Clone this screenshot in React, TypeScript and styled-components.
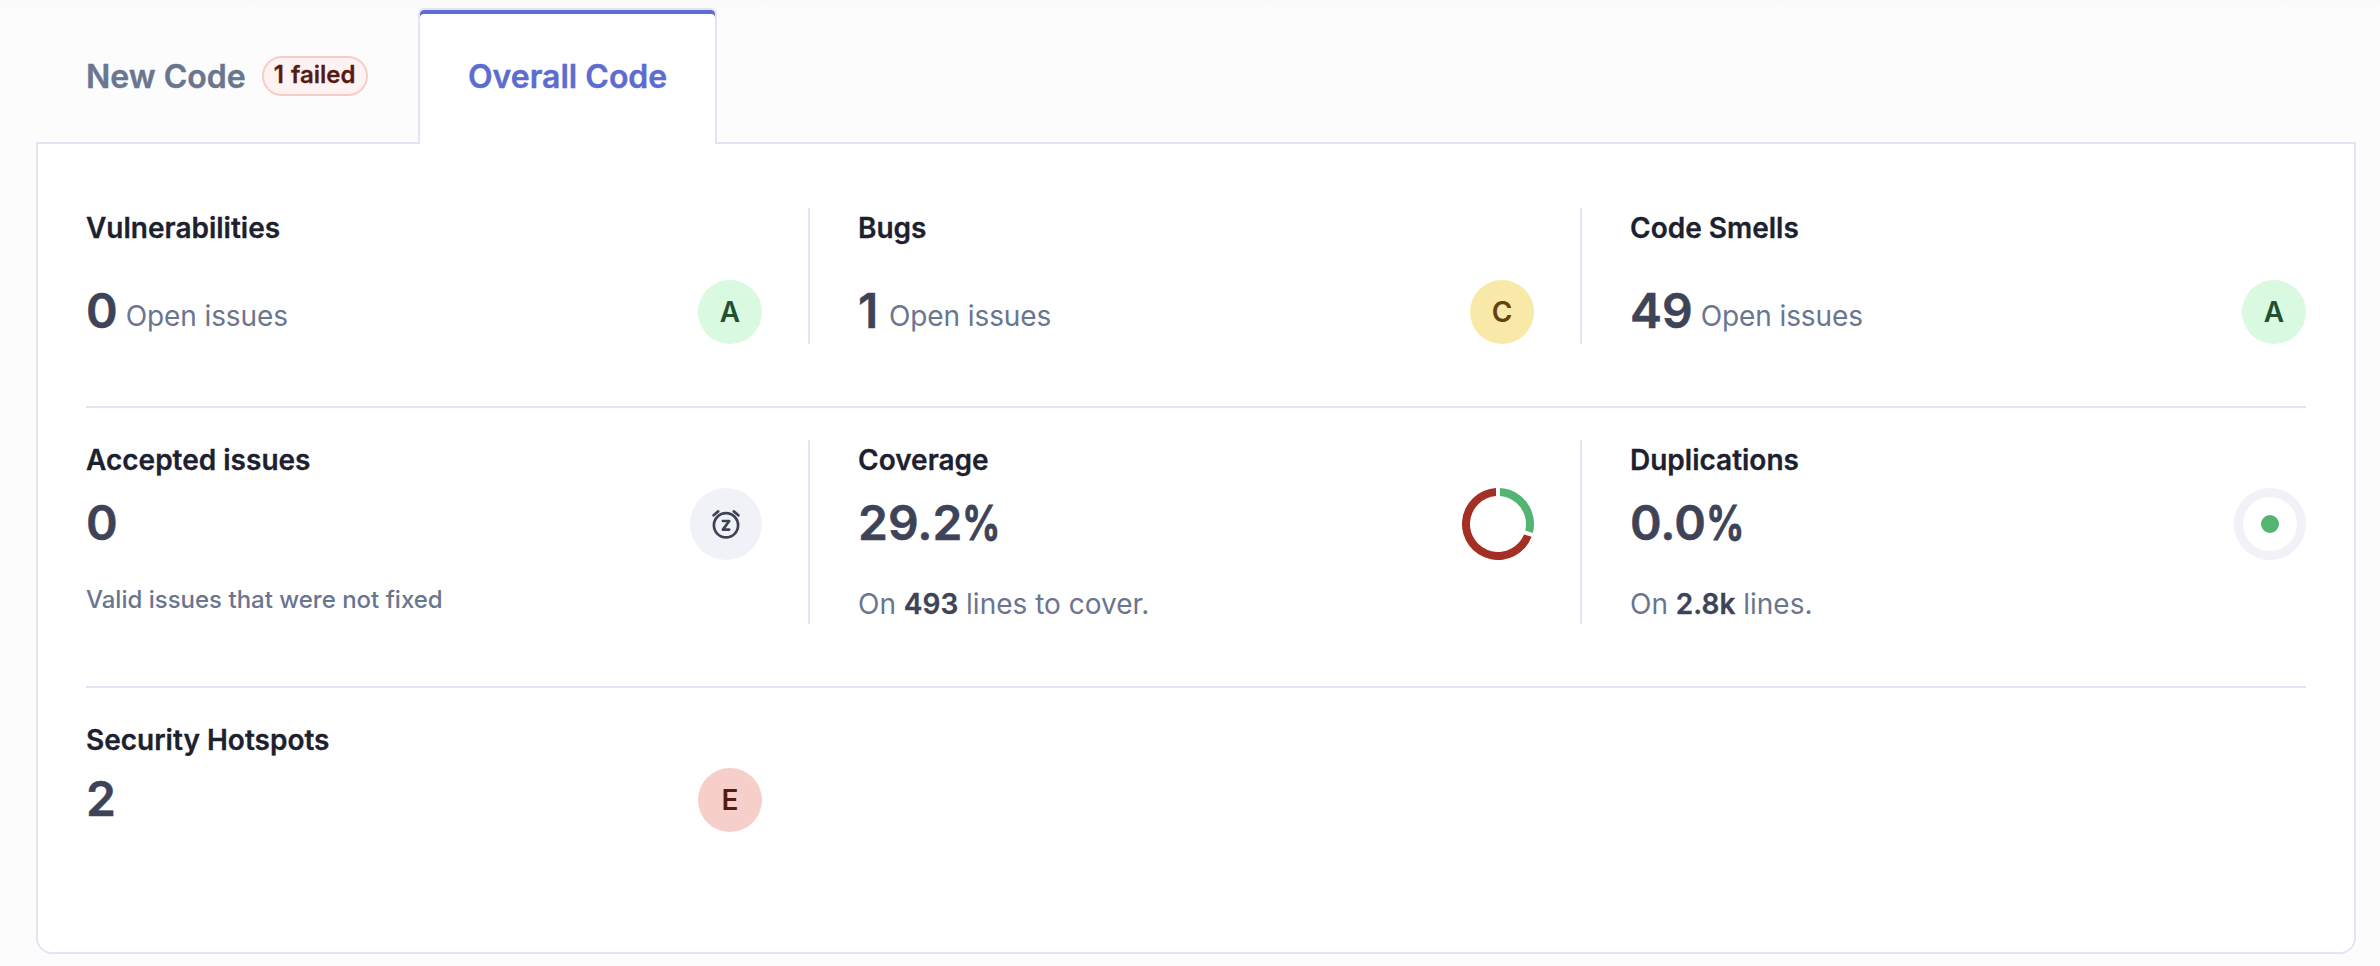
import React from "react";
import styled, { createGlobalStyle } from "styled-components";

const colors = {
  page: "#fcfcfd",
  panel: "#ffffff",
  border: "#e1e6f3",
  accent: "#5d6cd0",
  title: "#1d212f",
  value: "#3e4357",
  subtle: "#6a7590",
  disc: "#f1f2f8",
  good: "#54b471",
  bad: "#a43025",
};

const ratingColors = {
  A: { background: "#d9f9e1", text: "#215033" },
  C: { background: "#f9e9a9", text: "#66410f" },
  E: { background: "#f6cfca", text: "#551b13" },
};
type Grade = keyof typeof ratingColors;

const GlobalStyle = createGlobalStyle`
  *, *::before, *::after { box-sizing: border-box; }
  body {
    margin: 0;
    background: ${colors.page};
    font-family: Inter, "Liberation Sans", sans-serif;
  }
`;

const Page = styled.main`
  height: 966px;
  padding: 8px 24px 12px 36px;
  display: flex;
  flex-direction: column;
  background: linear-gradient(#f9f9f9, ${colors.page} 14px);
`;

const TabBar = styled.div`
  display: flex;
  height: 136px;
  margin-bottom: -2px;
  z-index: 1;
`;

const Tab = styled.button<{ $active?: boolean }>`
  appearance: none;
  flex: none;
  display: flex;
  align-items: center;
  gap: 16px;
  width: ${(p) => (p.$active ? 299 : 382)}px;
  padding: 0 0 2px 48px;
  border: 2px solid ${(p) => (p.$active ? colors.border : "transparent")};
  border-bottom: 0;
  border-radius: 6px 6px 0 0;
  background: ${(p) => (p.$active ? colors.panel : "transparent")};
  box-shadow: ${(p) => (p.$active ? `inset 0 4px 0 ${colors.accent}` : "none")};
  color: ${(p) => (p.$active ? colors.accent : colors.subtle)};
  font: 600 32px/48px Inter, "Liberation Sans", sans-serif;
  white-space: nowrap;
`;

const TabLabel = styled.span`
  padding-top: 2px;
  -webkit-text-stroke: 0.4px currentColor;
`;

const FailedBadge = styled.span`
  width: 106px;
  height: 40px;
  border: 2px solid #f8cdc8;
  border-radius: 20px;
  background: #fef3f2;
  color: #551b13;
  font-size: 24px;
  font-weight: 600;
  line-height: 34px;
  text-align: center;
  word-spacing: 1px;
  -webkit-text-stroke: 0.3px currentColor;
`;

const Panel = styled.section`
  flex: 1;
  padding: 64px 48px 0;
  border: 2px solid ${colors.border};
  border-radius: 0 0 16px 16px;
  background: ${colors.panel};
`;

const MeasureRow = styled.div`
  display: grid;
  grid-template-columns: 676px 726px 726px;
  column-gap: 46px;

  & + & {
    margin-top: 62px;
    padding-top: 32px;
    border-top: 2px solid ${colors.border};
  }
`;

const Measure = styled.article`
  display: flex;
  flex-direction: column;

  & + & {
    padding-left: 48px;
    border-left: 2px solid ${colors.border};
  }
`;

const Title = styled.h3`
  margin: 0;
  color: ${colors.title};
  font-size: 28px;
  font-weight: 600;
  line-height: 40px;
  -webkit-text-stroke: 0.3px currentColor;
`;

const ValueLine = styled.div<{ $spacious?: boolean }>`
  display: flex;
  align-items: center;
  justify-content: space-between;
  margin-top: ${(p) => (p.$spacious ? 32 : 8)}px;
`;

const ValueGroup = styled.div`
  display: flex;
  gap: 8px;
`;

const Value = styled.span`
  min-width: 23px;
  color: ${colors.value};
  font-size: 48px;
  font-weight: 600;
  line-height: 62px;
  padding-bottom: 2px;
  -webkit-text-stroke: 0.5px currentColor;
`;

const Percent = styled.span`
  display: inline-block;
  transform: scaleX(0.8);
  transform-origin: left;
  -webkit-text-stroke: 1px currentColor;
`;

const Unit = styled.span`
  padding-top: 16px;
  color: ${colors.subtle};
  font-size: 28px;
  line-height: 40px;
  letter-spacing: -0.1px;
`;

const Caption = styled.p<{ $small?: boolean }>`
  margin: 24px 0 0;
  color: ${colors.subtle};
  font-size: ${(p) => (p.$small ? 24 : 28)}px;
  font-weight: ${(p) => (p.$small ? 500 : 400)};
  line-height: ${(p) => (p.$small ? 32 : 40)}px;

  strong {
    color: ${colors.value};
    font-weight: 600;
    -webkit-text-stroke: 0.3px currentColor;
  }
`;

const RatingDisc = styled.span<{ $grade: Grade }>`
  display: grid;
  place-items: center;
  width: 64px;
  height: 64px;
  border-radius: 50%;
  background: ${(p) => ratingColors[p.$grade].background};
  color: ${(p) => ratingColors[p.$grade].text};
  font-size: 28px;
  font-weight: 600;
  line-height: 40px;
`;

const IconDisc = styled.span`
  display: grid;
  place-items: center;
  width: 72px;
  height: 72px;
  border-radius: 50%;
  background: ${colors.disc};
`;

const Graphic = styled.svg`
  display: block;
`;

function SnoozeIcon() {
  return (
    <Graphic
      width="32"
      height="32"
      viewBox="0 0 32 32"
      fill="none"
      stroke={colors.value}
      strokeWidth="2.7"
      strokeLinecap="round"
      strokeLinejoin="round"
    >
      <circle cx="16" cy="17.3" r="12.1" />
      <path d="M3.6 7.3 8.2 3.4M28.4 7.3 23.8 3.4" />
      <path d="M12.9 13h6.3l-6.3 8.6h6.3" />
    </Graphic>
  );
}

const OUTER = 36;
const INNER = 28;
const HALF_GAP = 2;

// Ring segment between two angles (degrees, clockwise from the top) with parallel gaps.
function segment(start: number, end: number) {
  const point = (radius: number, degrees: number, side: number) => {
    const angle = (degrees * Math.PI) / 180 + side * Math.asin(HALF_GAP / radius);
    return `${36 + radius * Math.sin(angle)} ${36 - radius * Math.cos(angle)}`;
  };
  const large = end - start > 180 ? 1 : 0;
  return [
    `M${point(OUTER, start, 1)}`,
    `A${OUTER} ${OUTER} 0 ${large} 1 ${point(OUTER, end, -1)}`,
    `L${point(INNER, end, -1)}`,
    `A${INNER} ${INNER} 0 ${large} 0 ${point(INNER, start, 1)}Z`,
  ].join("");
}

function CoverageDonut() {
  const split = 107.7;
  return (
    <Graphic width="72" height="72" viewBox="0 0 72 72">
      <path d={segment(0, split)} fill={colors.good} />
      <path d={segment(split, 360)} fill={colors.bad} />
    </Graphic>
  );
}

function DuplicationDot() {
  return (
    <Graphic width="72" height="72" viewBox="0 0 72 72">
      <circle cx="36" cy="36" r="31.5" fill="none" stroke={colors.disc} strokeWidth="9" />
      <circle cx="36" cy="36" r="9" fill={colors.good} />
    </Graphic>
  );
}

function IssueMeasure({ title, count, grade }: { title: string; count: number; grade: Grade }) {
  return (
    <Measure>
      <Title>{title}</Title>
      <ValueLine $spacious>
        <ValueGroup>
          <Value>{count}</Value>
          <Unit>Open issues</Unit>
        </ValueGroup>
        <RatingDisc $grade={grade}>{grade}</RatingDisc>
      </ValueLine>
    </Measure>
  );
}

export default function App() {
  return (
    <>
      <GlobalStyle />
      <Page>
        <TabBar>
          <Tab>
            <TabLabel>New Code</TabLabel>
            <FailedBadge>1 failed</FailedBadge>
          </Tab>
          <Tab $active>
            <TabLabel>Overall Code</TabLabel>
          </Tab>
        </TabBar>
        <Panel>
          <MeasureRow>
            <IssueMeasure title="Vulnerabilities" count={0} grade="A" />
            <IssueMeasure title="Bugs" count={1} grade="C" />
            <IssueMeasure title="Code Smells" count={49} grade="A" />
          </MeasureRow>
          <MeasureRow>
            <Measure>
              <Title>Accepted issues</Title>
              <ValueLine>
                <Value>0</Value>
                <IconDisc>
                  <SnoozeIcon />
                </IconDisc>
              </ValueLine>
              <Caption $small>Valid issues that were not fixed</Caption>
            </Measure>
            <Measure>
              <Title>Coverage</Title>
              <ValueLine>
                <Value>
                  29.2<Percent>%</Percent>
                </Value>
                <CoverageDonut />
              </ValueLine>
              <Caption>
                On <strong>493</strong> lines to cover.
              </Caption>
            </Measure>
            <Measure>
              <Title>Duplications</Title>
              <ValueLine>
                <Value>
                  0.0<Percent>%</Percent>
                </Value>
                <DuplicationDot />
              </ValueLine>
              <Caption>
                On <strong>2.8k</strong> lines.
              </Caption>
            </Measure>
          </MeasureRow>
          <MeasureRow>
            <Measure>
              <Title>Security Hotspots</Title>
              <ValueLine>
                <Value>2</Value>
                <RatingDisc $grade="E">E</RatingDisc>
              </ValueLine>
            </Measure>
          </MeasureRow>
        </Panel>
      </Page>
    </>
  );
}
